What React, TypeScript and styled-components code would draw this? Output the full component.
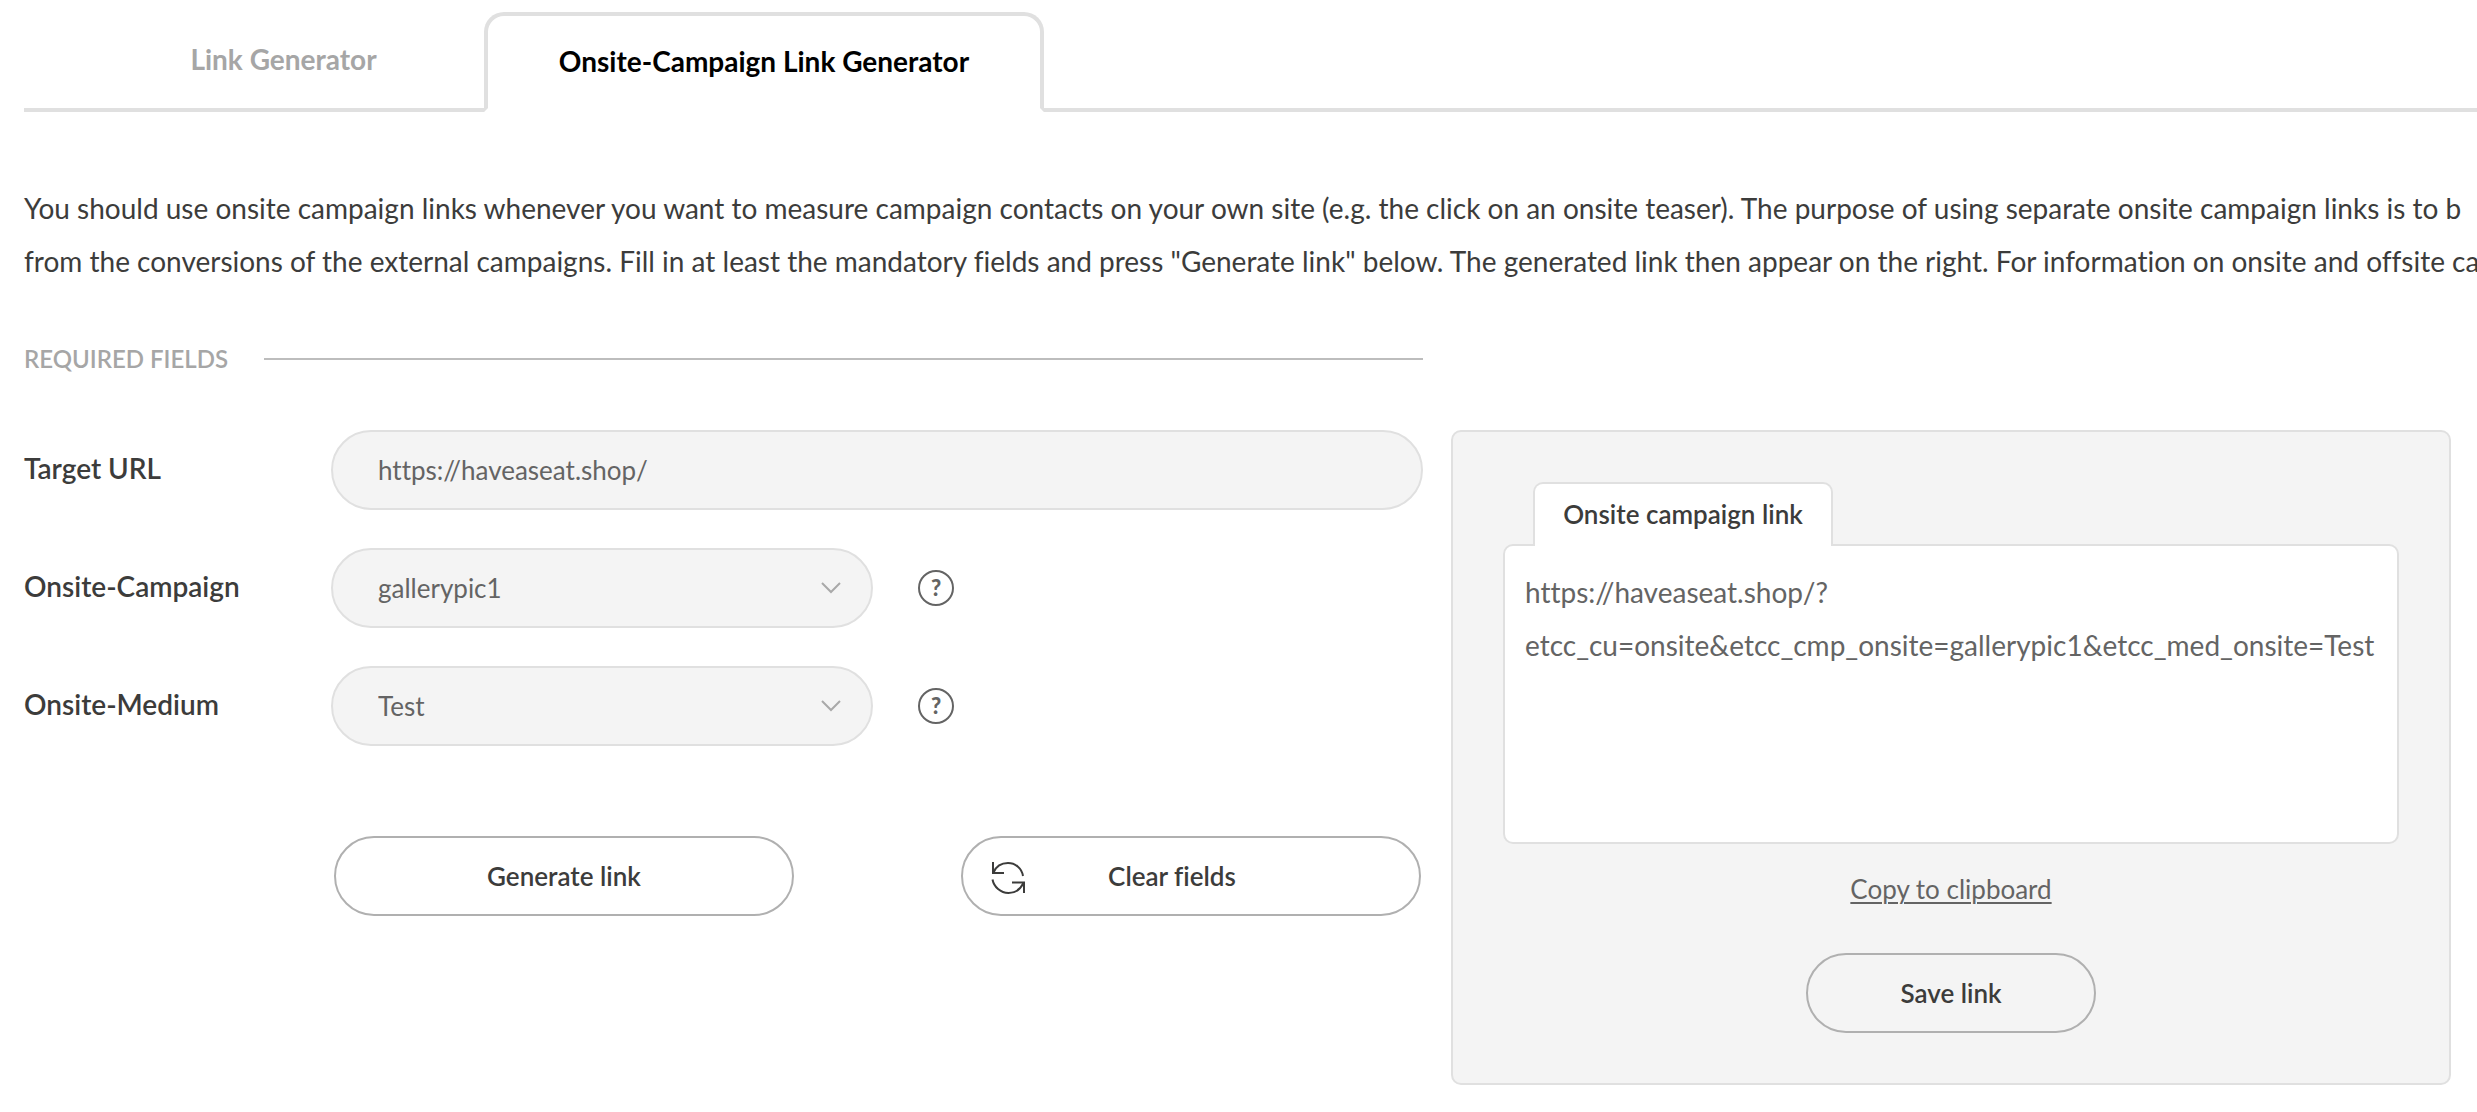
import React, { useState } from "react";
import styled, { createGlobalStyle } from "styled-components";

const color = {
  line: "#e0e0e0",
  rule: "#bdbdbd",
  outline: "#b0b0b0",
  surface: "#f4f4f4",
  muted: "#a6a6a6",
  text: "#3c3c3b",
  soft: "#646464",
};

const GlobalStyle = createGlobalStyle`
  *, *::before, *::after { box-sizing: border-box; }
  body {
    margin: 0;
    overflow-x: hidden;
    background: #ffffff;
    color: ${color.text};
    font-family: Lato, "Open Sans", sans-serif;
    font-size: 28px;
    font-variant-ligatures: none;
  }
  button, input, select, textarea { font: inherit; font-variant-ligatures: none; }
`;

const Tabs = styled.nav`
  display: flex;
  align-items: stretch;
  height: 112px;
  padding: 12px 0 0 24px;
`;

const TabLine = styled.span<{ $grow?: boolean }>`
  flex: ${(p) => (p.$grow ? "1" : "0 0 59px")};
  border-bottom: 4px solid ${color.line};
`;

const Tab = styled.button<{ $active?: boolean }>`
  flex: 0 0 ${(p) => (p.$active ? "560px" : "401px")};
  padding: 0 0 ${(p) => (p.$active ? "2px" : "6px")};
  background: #ffffff;
  border: 4px solid ${(p) => (p.$active ? color.line : "transparent")};
  border-bottom-color: ${(p) => (p.$active ? "#ffffff" : color.line)};
  border-left-width: ${(p) => (p.$active ? "4px" : "0")};
  border-right-width: ${(p) => (p.$active ? "4px" : "0")};
  border-radius: ${(p) => (p.$active ? "20px 20px 0 0" : "0")};
  color: ${(p) => (p.$active ? "#000000" : color.muted)};
  font-weight: 700;
  white-space: nowrap;
`;

const Intro = styled.p`
  margin: 0;
  padding: 70px 0 0 24px;
  line-height: 53px;
  white-space: nowrap;
  overflow: hidden;
`;

const Content = styled.main`
  display: grid;
  grid-template-columns: 1399fr 1000fr;
  column-gap: 28px;
  row-gap: 53px;
  align-items: start;
  padding: 53px 26px 26px 24px;
`;

const SectionHeading = styled.h2`
  grid-column: 1;
  display: flex;
  align-items: center;
  gap: 36px;
  margin: 0;
  color: ${color.muted};
  font-size: 24px;
  font-weight: 600;
  line-height: 36px;
  text-transform: uppercase;

  &::after {
    content: "";
    flex: 1;
    height: 2px;
    background: ${color.rule};
  }
`;

const Form = styled.form`
  grid-column: 1;
  display: flex;
  flex-direction: column;
  gap: 38px;
`;

const Row = styled.div`
  display: grid;
  grid-template-columns: 307px 1fr;
  align-items: center;
`;

const Label = styled.label`
  padding-bottom: 4px;
  font-weight: 600;
`;

const FieldGroup = styled.div`
  display: flex;
  align-items: center;
  gap: 45px;
`;

const TextInput = styled.input`
  width: 100%;
  height: 80px;
  padding: 0 45px;
  border: 2px solid ${color.line};
  border-radius: 40px;
  background: ${color.surface};
  color: ${color.soft};
  font-size: 26px;
  outline: none;
`;

const SelectWrap = styled.div`
  position: relative;
  flex: 0 0 542px;
`;

const SelectBox = styled.select`
  appearance: none;
  width: 100%;
  height: 80px;
  padding: 0 80px 0 45px;
  border: 2px solid ${color.line};
  border-radius: 40px;
  background: ${color.surface};
  color: ${color.soft};
  font-size: 26px;
  outline: none;
`;

const Chevron = styled.svg`
  position: absolute;
  top: 34px;
  right: 32px;
  width: 20px;
  height: 12px;
  pointer-events: none;
`;

const Help = styled.button`
  width: 36px;
  height: 36px;
  padding: 0;
  border: 2px solid ${color.soft};
  border-radius: 50%;
  background: none;
  color: ${color.soft};
  font-size: 22px;
  font-weight: 900;
  line-height: 32px;
`;

const Actions = styled.div`
  display: flex;
  justify-content: space-between;
  padding: 52px 2px 0 310px;
`;

const PillButton = styled.button<{ $width: number }>`
  display: flex;
  align-items: center;
  justify-content: center;
  width: ${(p) => p.$width}px;
  height: 80px;
  padding: 0 28px;
  border: 2px solid ${color.outline};
  border-radius: 40px;
  background: none;
  color: ${color.text};
  font-size: 26px;
  font-weight: 600;
`;

const PillText = styled.span`
  flex: 1;
  padding-right: 72px;
`;

const ResultPanel = styled.section`
  grid-column: 2;
  display: flex;
  flex-direction: column;
  align-items: center;
  padding: 50px;
  border: 2px solid ${color.line};
  border-radius: 10px;
  background: ${color.surface};
`;

const ResultTab = styled.label`
  align-self: flex-start;
  z-index: 1;
  width: 300px;
  height: 64px;
  margin: 0 0 -2px 30px;
  border: 2px solid ${color.line};
  border-bottom: 0;
  border-radius: 10px 10px 0 0;
  background: #ffffff;
  font-size: 26px;
  font-weight: 600;
  line-height: 60px;
  text-align: center;
`;

const ResultText = styled.textarea`
  width: 100%;
  height: 300px;
  padding: 20px;
  border: 2px solid ${color.line};
  border-radius: 10px;
  background: #ffffff;
  color: ${color.soft};
  line-height: 53px;
  resize: none;
  outline: none;
`;

const CopyLink = styled.a`
  margin: 19px 0 37px;
  color: ${color.soft};
  font-size: 26px;
  line-height: 53px;
  text-underline-offset: 3px;
  text-decoration-thickness: 2px;
`;

function SelectField({ id, label, options }: { id: string; label: string; options: string[] }) {
  return (
    <Row>
      <Label htmlFor={id}>{label}</Label>
      <FieldGroup>
        <SelectWrap>
          <SelectBox id={id}>
            {options.map((o) => (
              <option key={o}>{o}</option>
            ))}
          </SelectBox>
          <Chevron viewBox="0 0 20 12" fill="none" stroke="#a9a9a9" strokeWidth="2" aria-hidden="true">
            <path d="M1 1l9 9 9-9" />
          </Chevron>
        </SelectWrap>
        <Help type="button">?</Help>
      </FieldGroup>
    </Row>
  );
}

function RefreshIcon() {
  return (
    <svg width="34" height="38" viewBox="0 0 34 38" fill="none" stroke="#3c3c3b" strokeWidth="2" aria-hidden="true">
      <path d="M2 5v11h11" />
      <path d="M2.500 15.500C5 9.500 10.500 6 17 6c7.500 0 14 5.500 15 13" />
      <path d="M33 36V25.500H21" />
      <path d="M32.500 26C29.500 32 24 36 17.500 36 9.500 36 3 30 1.500 22.500" />
    </svg>
  );
}

export default function App() {
  const [url, setUrl] = useState("https://haveaseat.shop/");
  return (
    <>
      <GlobalStyle />
      <Tabs>
        <TabLine />
        <Tab type="button">Link Generator</Tab>
        <Tab type="button" $active>
          Onsite-Campaign Link Generator
        </Tab>
        <TabLine $grow />
      </Tabs>
      <Intro>
        You should use onsite campaign links whenever you want to measure campaign contacts on your own site (e.g. the
        click on an onsite teaser). The purpose of using separate onsite campaign links is to b
        <br />
        from the conversions of the external campaigns. Fill in at least the mandatory fields and press "Generate link"
        below. The generated link then appear on the right. For information on onsite and offsite ca
      </Intro>
      <Content>
        <SectionHeading>Required fields</SectionHeading>
        <Form onSubmit={(e) => e.preventDefault()}>
          <Row>
            <Label htmlFor="target">Target URL</Label>
            <TextInput id="target" value={url} onChange={(e) => setUrl(e.target.value)} />
          </Row>
          <SelectField id="campaign" label="Onsite-Campaign" options={["gallerypic1"]} />
          <SelectField id="medium" label="Onsite-Medium" options={["Test"]} />
          <Actions>
            <PillButton type="submit" $width={460}>
              Generate link
            </PillButton>
            <PillButton type="button" $width={460} onClick={() => setUrl("")}>
              <RefreshIcon />
              <PillText>Clear fields</PillText>
            </PillButton>
          </Actions>
        </Form>
        <ResultPanel>
          <ResultTab htmlFor="result">Onsite campaign link</ResultTab>
          <ResultText
            id="result"
            readOnly
            value="https://haveaseat.shop/?etcc_cu=onsite&etcc_cmp_onsite=gallerypic1&etcc_med_onsite=Test"
          />
          <CopyLink href="#result">Copy to clipboard</CopyLink>
          <PillButton type="button" $width={290}>
            Save link
          </PillButton>
        </ResultPanel>
      </Content>
    </>
  );
}
